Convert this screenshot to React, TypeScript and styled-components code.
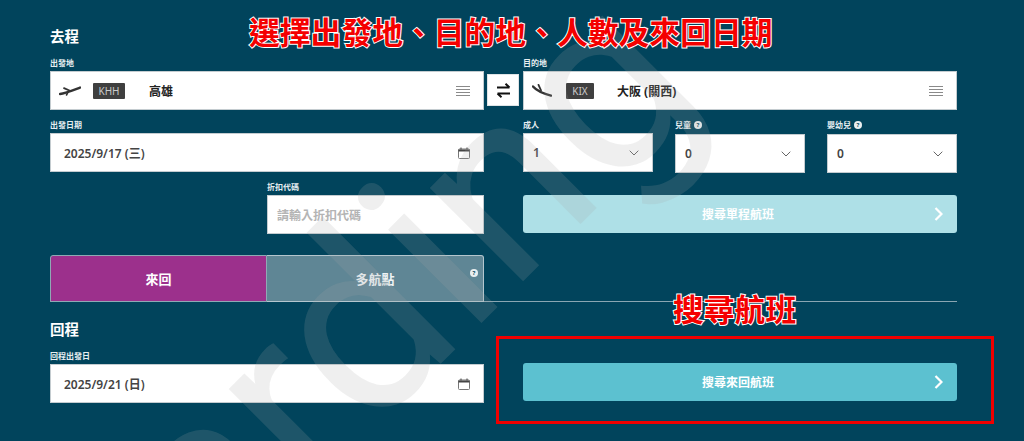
import React from 'react';
import styled, { createGlobalStyle } from 'styled-components';

const FONT = `"Noto Sans", "Noto Sans CJK TC", "Liberation Sans", sans-serif`;

const GlobalStyle = createGlobalStyle`
  html, body {
    margin: 0;
    padding: 0;
    background: #01445c;
  }
  * {
    box-sizing: border-box;
  }
`;

const Page = styled.div`
  position: relative;
  width: 1024px;
  height: 441px;
  overflow: hidden;
  padding: 27px 67px 0 50px;
  background: #01445c;
  font-family: ${FONT};
`;

const Watermark = styled.div`
  position: absolute;
  left: 42px;
  top: 819px;
  z-index: 2;
  white-space: nowrap;
  font-family: Roboto, sans-serif;
  font-weight: 400;
  font-size: 250px;
  line-height: 1;
  color: rgba(166, 166, 166, 0.18);
  transform-origin: 0 100%;
  transform: translateY(-100%) rotate(-45deg);
  pointer-events: none;
`;

const Annotation = styled.div<{ $top: number; $left: number }>`
  position: absolute;
  top: ${p => p.$top}px;
  left: ${p => p.$left}px;
  z-index: 3;
  white-space: nowrap;
  font-family: "Noto Sans CJK TC", sans-serif;
  font-weight: 700;
  font-size: 30.8px;
  line-height: 34px;
  color: #f40000;
  -webkit-text-stroke: 2px #ffffff;
  paint-order: stroke fill;
`;

const RedBox = styled.div`
  position: absolute;
  left: 496px;
  top: 336px;
  width: 498px;
  height: 88px;
  z-index: 3;
  border: 3px solid #f00000;
`;

const Heading = styled.h2`
  margin: 0;
  height: 18px;
  font-size: 14.5px;
  line-height: 18px;
  font-weight: 700;
  color: #ffffff;
`;

const TripGrid = styled.div`
  display: grid;
  grid-template-columns: 434px 39px 434px;
  row-gap: 9px;
  margin-top: 12px;
`;

const FieldGroup = styled.div<{ $narrow?: boolean }>`
  display: flex;
  flex-direction: column;
  width: ${p => (p.$narrow ? '217px' : 'auto')};
  justify-self: ${p => (p.$narrow ? 'end' : 'stretch')};
`;

const Label = styled.label`
  display: flex;
  align-items: center;
  gap: 3px;
  height: 14px;
  flex: none;
  padding-bottom: 3px;
  font-size: 8px;
  line-height: 11px;
  font-weight: 700;
  color: #e6eef1;
`;

const Field = styled.div<{ $nudge?: boolean; $tight?: boolean }>`
  display: flex;
  align-items: center;
  flex: none;
  height: 39px;
  margin-top: ${p => (p.$nudge ? '1px' : '0')};
  padding: 0 13px 0 ${p => (p.$tight ? '9px' : '13px')};
  background: #ffffff;
  border: 1px solid #c4ccd0;
  font-size: 12px;
  font-weight: 600;
  color: #444444;
`;

const Spread = styled.span`
  flex: 1;
`;

const PlaneSlot = styled.span`
  display: flex;
  width: 22px;
  margin-left: -5px;
  margin-right: 12px;
`;

const Code = styled.span<{ $width: number }>`
  display: flex;
  align-items: center;
  justify-content: center;
  width: ${p => p.$width}px;
  height: 16px;
  border-radius: 1px;
  background: #3f3f3f;
  color: #c9c9c9;
  font-size: 10px;
  font-weight: 400;
`;

const City = styled.span<{ $gap: number }>`
  margin-left: ${p => p.$gap}px;
  font-size: 12px;
  font-weight: 700;
  color: #222222;
`;

const SwapCell = styled.div`
  display: flex;
  justify-content: center;
  padding-top: 17px;
  padding-right: 1px;
`;

const SwapButton = styled.button`
  display: flex;
  align-items: center;
  justify-content: center;
  width: 32px;
  height: 32px;
  padding: 0;
  background: #ffffff;
  border: 1px solid #dfe4e6;
  color: #111111;
`;

const PaxRow = styled.div`
  display: grid;
  grid-template-columns: repeat(3, 130px);
  column-gap: 22px;
  height: 53px;
`;

const Placeholder = styled.span`
  color: #b4b4b4;
  font-size: 12px;
  font-weight: 600;
`;

const SearchButton = styled.button<{ $faded?: boolean }>`
  position: relative;
  display: flex;
  align-items: center;
  justify-content: center;
  width: 434px;
  height: 38px;
  padding: 0 4px 0 0;
  border: 0;
  border-radius: 3px;
  background: ${p => (p.$faded ? '#aee0e7' : '#5cc1d0')};
  color: #ffffff;
  font-family: ${FONT};
  font-size: 12px;
  font-weight: 700;
`;

const ButtonChevron = styled.span`
  position: absolute;
  right: 14px;
  top: 12px;
  display: flex;
`;

const SearchCell = styled.div`
  padding-top: 14px;
`;

const TabBar = styled.div`
  margin-top: 21px;
  border-bottom: 1px solid #8aa6b2;
`;

const Tabs = styled.div`
  display: flex;
  width: 434px;
  height: 47px;
  margin-bottom: -1px;
`;

const Tab = styled.div<{ $active?: boolean }>`
  position: relative;
  display: flex;
  align-items: center;
  justify-content: center;
  flex: ${p => (p.$active ? '0 0 217px' : '1')};
  border: 1px solid ${p => (p.$active ? '#8fa9b5' : '#b4c6ce')};
  border-left-width: ${p => (p.$active ? '1px' : '0')};
  border-radius: ${p => (p.$active ? '3px 0 0 0' : '0 3px 0 0')};
  background: ${p => (p.$active ? '#9c308c' : '#5f8695')};
  color: ${p => (p.$active ? '#ffffff' : '#eef3f5')};
  font-size: 13px;
  font-weight: 700;
`;

const TabHelp = styled.span`
  position: absolute;
  top: 5px;
  right: 5px;
`;

const HelpDot = styled.span`
  display: inline-flex;
  align-items: center;
  justify-content: center;
  width: 8px;
  height: 8px;
  border-radius: 50%;
  background: #e9eef0;
  color: #01445c;
  font-size: 6px;
  line-height: 8px;
  font-weight: 700;
`;

const ReturnGrid = styled.div`
  display: grid;
  grid-template-columns: 434px 39px 434px;
  align-items: end;
  padding-top: 18px;
`;

const ReturnColumn = styled.div`
  grid-column: 1;
  display: flex;
  flex-direction: column;
  gap: 12px;
`;

const ReturnAction = styled.div`
  grid-column: 3;
  padding-bottom: 2px;
`;

const PlaneUp = () => (
  <svg width="22" height="11" viewBox="0 0 22 11" fill="none" stroke="#333333" strokeLinecap="round">
    <path d="M1 9C6 8.4 13 5.6 21 2.6" strokeWidth="2.4" />
    <path d="M5 3.2L11.5 6" strokeWidth="1.8" />
    <path d="M9 7.2L7.5 10" strokeWidth="1.6" />
  </svg>
);

const PlaneDown = () => (
  <svg width="20" height="13" viewBox="0 0 20 13" fill="none" stroke="#333333" strokeLinecap="round">
    <path d="M1 2.5C4 6 10 9.2 19 11.6" strokeWidth="2.4" />
    <path d="M6.5 0.8L9 6.4" strokeWidth="1.8" />
  </svg>
);

const Hamburger = () => (
  <svg width="14" height="10" viewBox="0 0 14 10" stroke="#8a8a8a" strokeWidth="1">
    <path d="M0 0.5H14M0 3.5H14M0 6.5H14M0 9.5H14" />
  </svg>
);

const CalendarIcon = () => (
  <svg width="12" height="12" viewBox="0 0 12 12" fill="none">
    <rect x="0.5" y="2" width="11" height="9.5" rx="1" stroke="#777777" />
    <path d="M0.5 2.5H11.5V4.5H0.5Z" fill="#444444" />
    <path d="M3 0.5V2.5M9 0.5V2.5" stroke="#444444" />
  </svg>
);

const SelectChevron = () => (
  <svg width="10" height="6" viewBox="0 0 10 6" fill="none" stroke="#666666" strokeWidth="1">
    <path d="M0.7 0.7L5 5L9.3 0.7" />
  </svg>
);

const NextChevron = () => (
  <svg width="9" height="14" viewBox="0 0 9 14" fill="none" stroke="#ffffff" strokeWidth="2.2">
    <path d="M1.5 1L7.5 7L1.5 13" />
  </svg>
);

const SwapIcon = () => (
  <svg width="15" height="15" viewBox="0 0 15 15" fill="none" stroke="#111111" strokeWidth="2">
    <path d="M1 4.5H13.5M9.5 0.8L13.5 4.5" />
    <path d="M14 10.5H1.5M5.5 14.2L1.5 10.5" />
  </svg>
);

const CalendarField: React.FC<{ value: string }> = ({ value }) => (
  <Field>
    <span>{value}</span>
    <Spread />
    <CalendarIcon />
  </Field>
);

const PaxSelect: React.FC<{ label: string; value: string; help?: boolean; nudge?: boolean }> = ({
  label,
  value,
  help,
  nudge,
}) => (
  <FieldGroup>
    <Label>
      {label}
      {help && <HelpDot>?</HelpDot>}
    </Label>
    <Field $nudge={nudge} $tight>
      <span>{value}</span>
      <Spread />
      <SelectChevron />
    </Field>
  </FieldGroup>
);

export default function App() {
  return (
    <Page>
      <GlobalStyle />
      <Heading>去程</Heading>
      <TripGrid>
        <FieldGroup>
          <Label>出發地</Label>
          <Field>
            <PlaneSlot>
              <PlaneUp />
            </PlaneSlot>
            <Code $width={32}>KHH</Code>
            <City $gap={24}>高雄</City>
            <Spread />
            <Hamburger />
          </Field>
        </FieldGroup>
        <SwapCell>
          <SwapButton>
            <SwapIcon />
          </SwapButton>
        </SwapCell>
        <FieldGroup>
          <Label>目的地</Label>
          <Field>
            <PlaneSlot>
              <PlaneDown />
            </PlaneSlot>
            <Code $width={28}>KIX</Code>
            <City $gap={23}>大阪 (關西)</City>
            <Spread />
            <Hamburger />
          </Field>
        </FieldGroup>

        <FieldGroup>
          <Label>出發日期</Label>
          <CalendarField value="2025/9/17 (三)" />
        </FieldGroup>
        <span />
        <PaxRow>
          <PaxSelect label="成人" value="1" />
          <PaxSelect label="兒童" value="0" help nudge />
          <PaxSelect label="嬰幼兒" value="0" help nudge />
        </PaxRow>

        <FieldGroup $narrow>
          <Label>折扣代碼</Label>
          <Field $tight>
            <Placeholder>請輸入折扣代碼</Placeholder>
          </Field>
        </FieldGroup>
        <span />
        <SearchCell>
          <SearchButton $faded>
            搜尋單程航班
            <ButtonChevron>
              <NextChevron />
            </ButtonChevron>
          </SearchButton>
        </SearchCell>
      </TripGrid>

      <TabBar>
        <Tabs>
          <Tab $active>來回</Tab>
          <Tab>
            多航點
            <TabHelp>
              <HelpDot>?</HelpDot>
            </TabHelp>
          </Tab>
        </Tabs>
      </TabBar>

      <ReturnGrid>
        <ReturnColumn>
          <Heading>回程</Heading>
          <FieldGroup>
            <Label>回程出發日</Label>
            <CalendarField value="2025/9/21 (日)" />
          </FieldGroup>
        </ReturnColumn>
        <ReturnAction>
          <SearchButton>
            搜尋來回航班
            <ButtonChevron>
              <NextChevron />
            </ButtonChevron>
          </SearchButton>
        </ReturnAction>
      </ReturnGrid>

      <Watermark aria-hidden="true">boarding</Watermark>
      <Annotation $top={14} $left={249}>選擇出發地、目的地、人數及來回日期</Annotation>
      <Annotation $top={291} $left={673}>搜尋航班</Annotation>
      <RedBox />
    </Page>
  );
}
